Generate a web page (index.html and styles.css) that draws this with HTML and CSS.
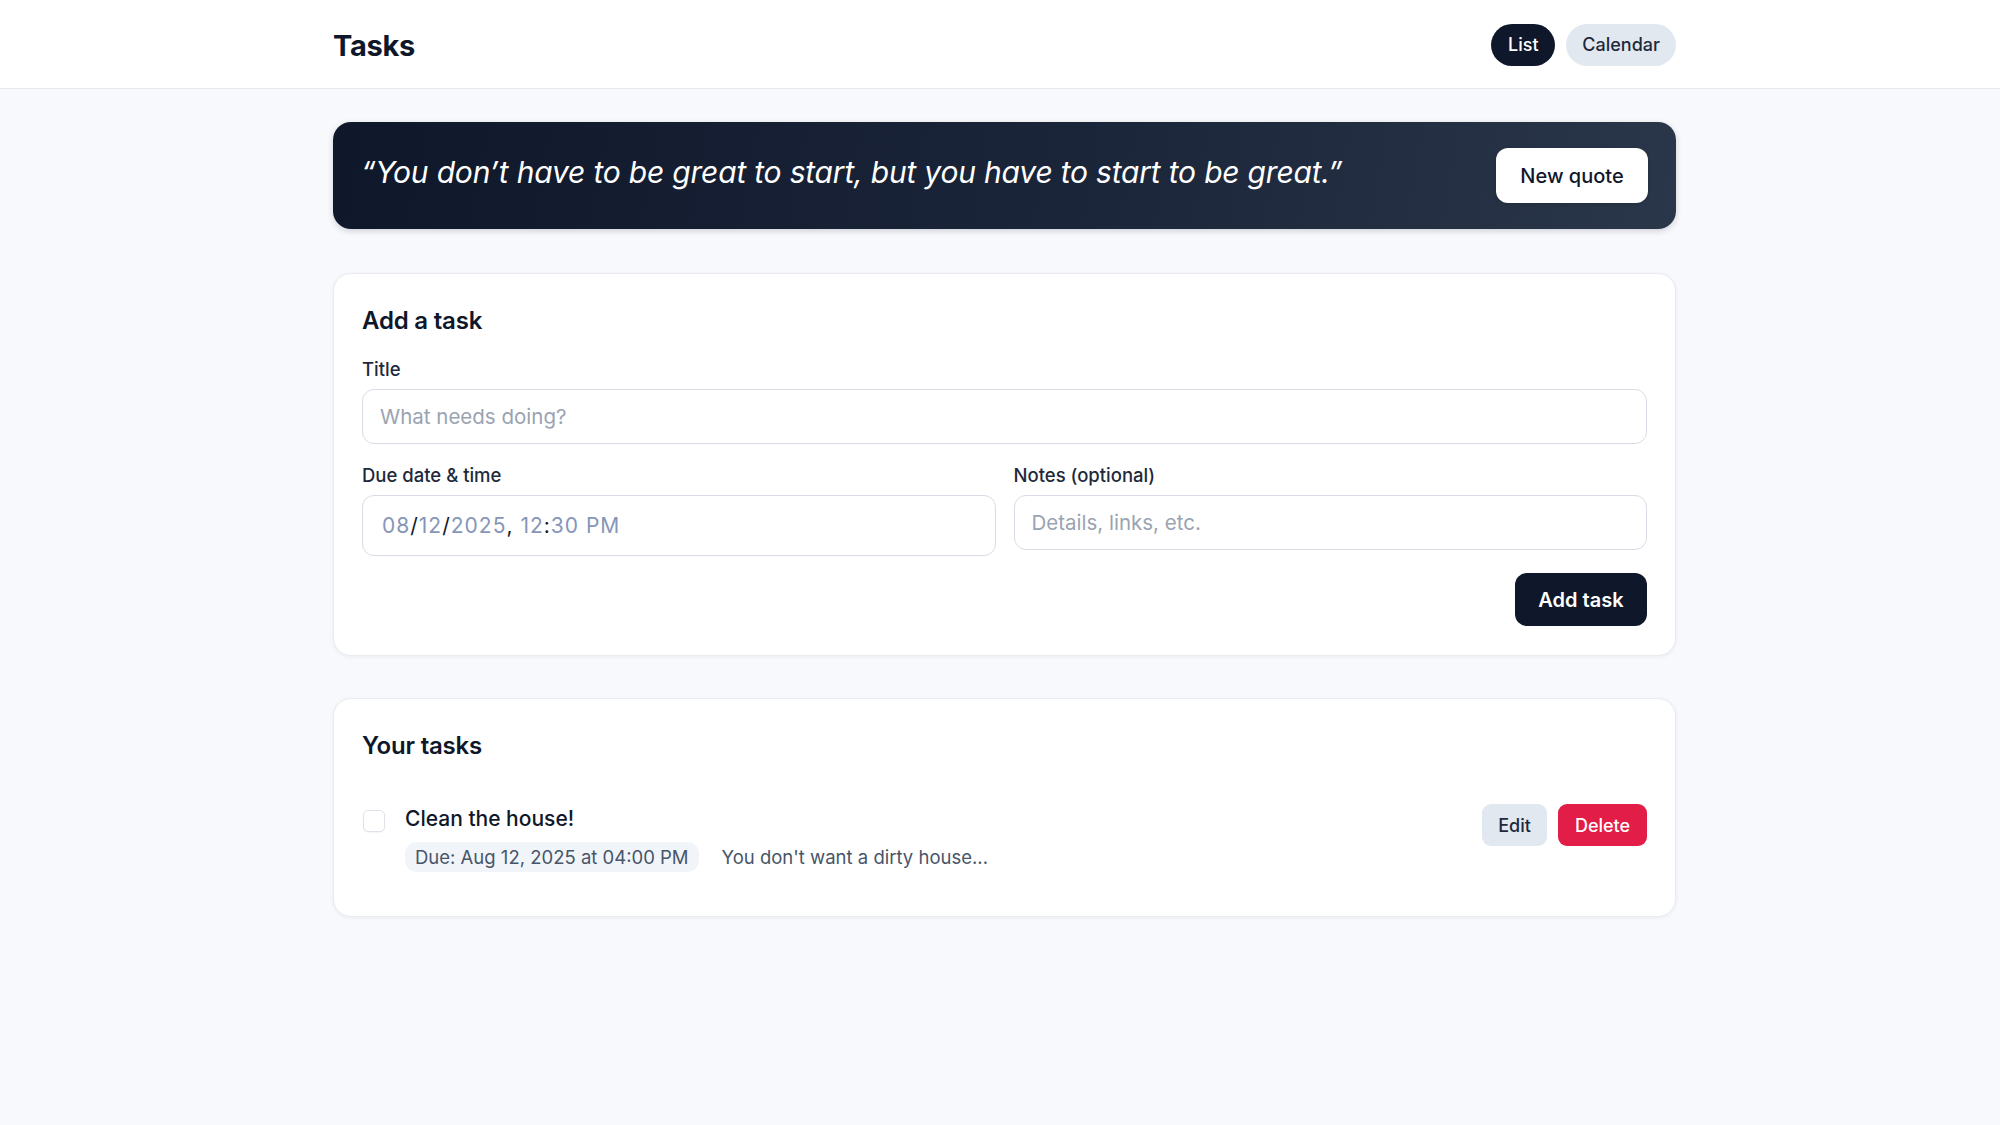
FILE: index.html
```html
<!DOCTYPE html>
<html lang="en">
<head>
<meta charset="utf-8">
<title>Tasks</title>
<link rel="stylesheet" href="styles.css">
</head>
<body>
<header class="topbar">
  <div class="shell">
    <div class="container topbar-inner">
      <h1 class="brand">Tasks</h1>
      <nav class="view-switch">
        <button class="pill pill-active">List</button>
        <button class="pill">Calendar</button>
      </nav>
    </div>
  </div>
</header>
<main class="shell">
  <div class="container">
    <section class="quote-banner">
      <p class="quote-text">“You don’t have to be great to start, but you have to start to be great.”</p>
      <button class="quote-btn">New quote</button>
    </section>

    <section class="card add-card">
      <h2 class="card-title">Add a task</h2>
      <div class="field">
        <label class="field-label">Title</label>
        <input class="text-input" type="text" placeholder="What needs doing?">
      </div>
      <div class="field-row">
        <div class="field">
          <label class="field-label">Due date &amp; time</label>
          <div class="text-input date-input"><span class="seg">08</span><span class="sep">/</span><span class="seg">12</span><span class="sep">/</span><span class="seg">2025</span><span class="sep">,</span>&nbsp;<span class="seg">12</span><span class="sep">:</span><span class="seg">30</span>&nbsp;<span class="seg">PM</span></div>
        </div>
        <div class="field">
          <label class="field-label">Notes (optional)</label>
          <input class="text-input" type="text" placeholder="Details, links, etc.">
        </div>
      </div>
      <div class="form-actions">
        <button class="btn-primary">Add task</button>
      </div>
    </section>

    <section class="card tasks-card">
      <h2 class="card-title">Your tasks</h2>
      <ul class="task-list">
        <li class="task-row">
          <span class="checkbox"></span>
          <div class="task-body">
            <div class="task-title">Clean the house!</div>
            <div class="task-meta">
              <span class="due-pill">Due: Aug 12, 2025 at 04:00 PM</span>
              <span class="task-notes">You don't want a dirty house...</span>
            </div>
          </div>
          <div class="task-actions">
            <button class="btn-edit">Edit</button>
            <button class="btn-delete">Delete</button>
          </div>
        </li>
      </ul>
    </section>
  </div>
</main>
</body>
</html>
```

FILE: styles.css
```css
* { box-sizing: border-box; }

html, body {
  margin: 0;
  padding: 0;
}

body {
  font-family: "Inter", "Noto Sans", "Liberation Sans", sans-serif;
  background: #f8f9fc;
  color: #0f172a;
  min-height: 1125px;
}

button {
  font-family: inherit;
  border: none;
  cursor: pointer;
}

.shell {
  padding-left: 9px;
}

.container {
  width: 1343px;
  margin: 0 auto;
}

/* Top bar */
.topbar {
  background: #ffffff;
  border-bottom: 1px solid #e7e9ee;
}

.topbar-inner {
  height: 88px;
  display: flex;
  align-items: center;
  justify-content: space-between;
}

.brand {
  margin: 0;
  padding-top: 2px;
  font-size: 29px;
  font-weight: 700;
  letter-spacing: -0.3px;
  color: #0f172a;
}

.view-switch {
  display: flex;
  gap: 11px;
  padding-top: 1px;
}

.pill {
  height: 42px;
  border-radius: 21px;
  padding: 0 16px;
  font-size: 18px;
  font-weight: 500;
  background: #e2e8f0;
  color: #1e293b;
}

.pill-active {
  background: #0f172a;
  color: #ffffff;
  width: 64px;
}

/* Quote banner */
.quote-banner {
  margin-top: 33px;
  height: 107px;
  border-radius: 18px;
  background: linear-gradient(100deg, #0f172a 0%, #1b2539 55%, #2a3649 100%);
  display: flex;
  align-items: center;
  justify-content: space-between;
  padding: 0 28px 0 28px;
  box-shadow: 0 2px 6px rgba(15, 23, 42, 0.18);
}

.quote-text {
  margin: 0 0 8px;
  color: #ffffff;
  font-size: 30px;
  font-style: italic;
  font-weight: 400;
  letter-spacing: -0.2px;
}

.quote-btn {
  height: 55px;
  width: 152px;
  border-radius: 12px;
  background: #ffffff;
  color: #0f172a;
  font-size: 20px;
  font-weight: 500;
  box-shadow: 0 1px 3px rgba(0, 0, 0, 0.15);
}

/* Cards */
.card {
  background: #ffffff;
  border: 1px solid #e8ebf0;
  border-radius: 18px;
  box-shadow: 0 1px 4px rgba(15, 23, 42, 0.06);
  padding: 31px 28px 29px;
}

.add-card {
  margin-top: 44px;
}

.tasks-card {
  margin-top: 42px;
  padding-bottom: 28px;
}

.card-title {
  margin: 0;
  font-size: 24px;
  line-height: 32px;
  font-weight: 600;
  color: #0f172a;
  letter-spacing: -0.2px;
}

.field {
  display: flex;
  flex-direction: column;
  gap: 8px;
}

.add-card > .field {
  margin-top: 20px;
}

.field-label {
  font-size: 18.5px;
  line-height: 24px;
  font-weight: 500;
  color: #1e293b;
}

.text-input {
  height: 55px;
  width: 100%;
  border: 1px solid #d8dde5;
  border-radius: 12px;
  padding: 0 17px;
  font-family: inherit;
  font-size: 20.5px;
  color: #0f172a;
  background: #ffffff;
  outline: none;
}

.text-input::placeholder {
  color: #9aa3b1;
}

.field-row {
  margin-top: 19px;
  display: grid;
  grid-template-columns: 1fr 1fr;
  gap: 18px;
  align-items: start;
}

.date-input {
  height: 61px;
  display: flex;
  align-items: center;
  padding: 0 19px;
  font-size: 21px;
  letter-spacing: 1px;
}

.date-input .seg {
  color: #8596b8;
}

.date-input .sep {
  color: #111827;
}

.form-actions {
  margin-top: 17px;
  display: flex;
  justify-content: flex-end;
}

.btn-primary {
  height: 53px;
  width: 132px;
  border-radius: 12px;
  background: #0f172a;
  color: #ffffff;
  font-size: 20px;
  font-weight: 600;
}

/* Task list */
.task-list {
  list-style: none;
  margin: 24px 0 0;
  padding: 0;
}

.task-row {
  display: flex;
  align-items: flex-start;
  padding: 19px 0 16px;
}

.checkbox {
  width: 22px;
  height: 22px;
  margin-top: 5px;
  margin-left: 1px;
  border: 1px solid #dfe3e9;
  border-radius: 5px;
  background: #ffffff;
  flex-shrink: 0;
  box-shadow: 0 1px 1px rgba(0, 0, 0, 0.04);
}

.task-body {
  flex: 1;
  margin-left: 20px;
}

.task-title {
  font-size: 21px;
  line-height: 28px;
  font-weight: 500;
  color: #0f172a;
}

.task-meta {
  margin-top: 9px;
  display: flex;
  align-items: center;
  gap: 23px;
}

.due-pill {
  height: 30px;
  display: inline-flex;
  align-items: center;
  padding: 0 10px;
  border-radius: 12px;
  background: #f1f5f9;
  color: #475569;
  font-size: 18.5px;
}

.task-notes {
  font-size: 18.5px;
  color: #475569;
}

.task-actions {
  display: flex;
  gap: 11px;
  margin-top: -1px;
}

.btn-edit,
.btn-delete {
  height: 42px;
  border-radius: 9px;
  font-size: 18px;
  font-weight: 500;
}

.btn-edit {
  width: 65px;
  background: #e2e8f0;
  color: #1e293b;
}

.btn-delete {
  width: 89px;
  background: #e11d48;
  color: #ffffff;
}
```
